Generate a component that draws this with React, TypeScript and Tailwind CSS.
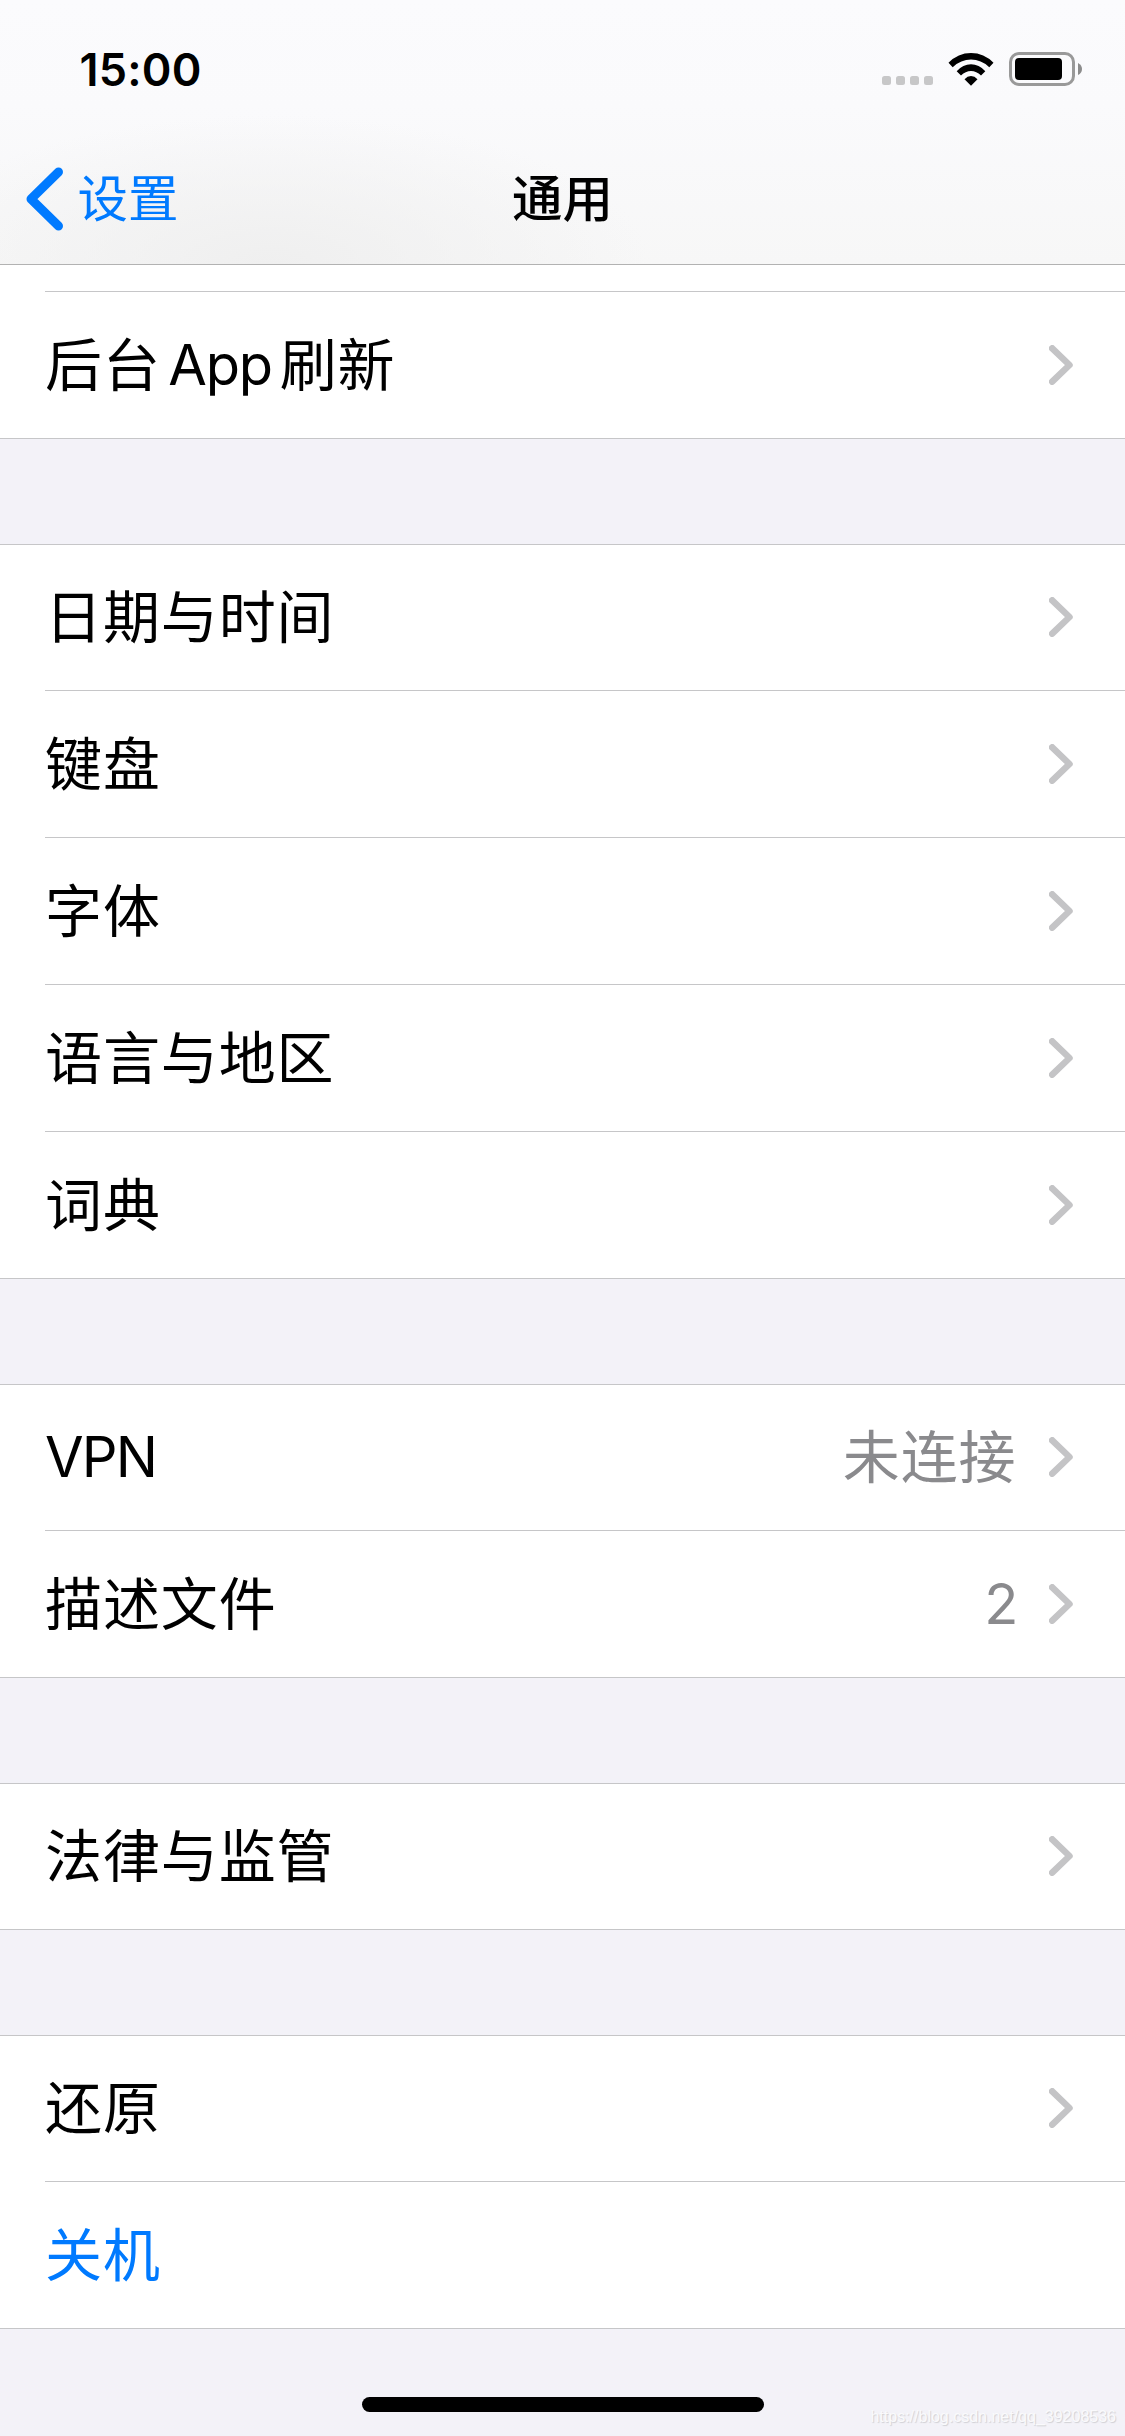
import React from "react";

type Item = { label: string; value?: string; action?: boolean };

function Chevron() {
  return (
    <svg width="24" height="40" viewBox="0 0 24 40" fill="none" className="shrink-0">
      <path d="M3.2 3.3 L20.5 20 L3.2 36.7" stroke="#c4c4c6" strokeWidth="6.5" strokeLinecap="round" strokeLinejoin="round" />
    </svg>
  );
}

function Label({ text }: { text: string }) {
  return (
    <>
      {text.split(/([A-Za-z0-9]+)/).filter(Boolean).map((part, i) =>
        /^[A-Za-z0-9]/.test(part) ? (
          <span key={i} className={i > 0 ? "mr-[8px] ml-[7.5px] text-[56px] tracking-[-1.3px]" : "text-[56px] tracking-[-1.8px]"}>{part}</span>
        ) : (
          <span key={i} className="align-[-1px] leading-none tracking-[0.9px]">{part}</span>
        )
      )}
    </>
  );
}

function Row({ item, first, last }: { item: Item; first: boolean; last: boolean }) {
  return (
    <li className={`flex pl-[45px] ${first ? "h-[146px]" : "h-[147px]"} ${last ? "border-b border-[#c6c6c8]" : ""}`}>
      <div className={`flex flex-1 items-center pr-[52px] ${first ? "pb-px" : ""} ${last ? "" : "border-b border-[#c6c6c8]"}`}>
        <span className={`flex-1 whitespace-pre text-[57px] leading-[84px] ${item.action ? "text-[#007aff]" : "text-black"}`}>
          <Label text={item.label} />
        </span>
        {item.value && (
          <span className="mr-[32.5px] text-[57px] leading-[84px] text-[#8a8a8d]">
            <Label text={item.value} />
          </span>
        )}
        {!item.action && <Chevron />}
      </div>
    </li>
  );
}

function Group({ items }: { items: Item[] }) {
  return (
    <ul className="border-t border-[#c6c6c8] bg-white">
      {items.map((item, i) => (
        <Row key={item.label} item={item} first={i === 0} last={i === items.length - 1} />
      ))}
    </ul>
  );
}

function StatusIcons() {
  return (
    <div className="flex items-center">
      <div className="mt-[22px] flex gap-[5px]">
        {[0, 1, 2, 3].map((i) => (
          <span key={i} className="size-[9px] rounded-[2.5px] bg-[#c7c7c8]" />
        ))}
      </div>
      <svg width="46" height="33" viewBox="0 0 46 33" className="ml-[15px]">
        <path d="M0.5 9.8 Q10 0 23 0 T45.500 9.800 L41.300 14.200 Q33 6.600 23 6.600 T4.700 14.200 Z" />
        <path d="M8.700 18.200 Q15 11.300 23 11.300 T37.300 18.200 L33 22.600 Q28.500 18 23 18 T13 22.600 Z" />
        <path d="M16.500 26.300 Q19.400 23 23 23 T29.500 26.300 L23 32.800 Z" />
      </svg>
      <svg width="74" height="34" viewBox="0 0 74 34" className="ml-[15px]">
        <rect x="1.500" y="1.500" width="63" height="31" rx="8.500" fill="none" stroke="#999999" strokeWidth="3" />
        <rect x="6" y="6" width="47" height="22" rx="4" />
        <path d="M69 11 Q73 13 73 17 T69 23 Z" fill="#8c8c8c" />
      </svg>
    </div>
  );
}

const groups: Item[][] = [
  [{ label: "日期与时间" }, { label: "键盘" }, { label: "字体" }, { label: "语言与地区" }, { label: "词典" }],
  [{ label: "VPN", value: "未连接" }, { label: "描述文件", value: "2" }],
  [{ label: "法律与监管" }],
  [{ label: "还原" }, { label: "关机", action: true }],
];

export default function App() {
  return (
    <main className="relative h-[2436px] w-[1125px] overflow-hidden bg-[#f3f2f8] font-[Inter,'Noto_Sans_CJK_SC',sans-serif]">
      <header className="flex h-[265px] flex-col border-b border-[#b2b2b2] bg-[radial-gradient(ellipse_380px_150px_at_270px_265px,#efefef,transparent),linear-gradient(to_bottom,#fbfbfd,#fafafc_40%,#f7f7f7)]">
        <div className="flex h-[138px] items-center justify-between pr-[42px] pl-[79.5px]">
          <time className="text-[45px] leading-none font-semibold tracking-[0.2px]">15:00</time>
          <StatusIcons />
        </div>
        <nav className="grid flex-1 grid-cols-3 items-center pb-[5px]">
          <button className="flex items-center pl-[26px] text-[#007aff]">
            <svg width="37" height="64" viewBox="0 0 37 64" fill="none">
              <path d="M32.500 5 L5 32 L32.500 59" stroke="currentColor" strokeWidth="9" strokeLinecap="round" strokeLinejoin="round" />
            </svg>
            <span className="ml-[14.5px] text-[50.5px] leading-[72px]">设置</span>
          </button>
          <h1 className="text-center text-[50.5px] leading-[72px] font-medium">通用</h1>
        </nav>
      </header>

      <div className="flex h-[27px] bg-white pl-[45px]">
        <div className="flex-1 border-b border-[#c6c6c8]" />
      </div>
      <ul className="bg-white">
        <Row item={{ label: "后台App刷新" }} first={false} last />
      </ul>
      <div className="mt-[105px] flex flex-col gap-[105px]">
        {groups.map((items) => (
          <Group key={items[0].label} items={items} />
        ))}
      </div>

      <div className="mx-auto mt-[68px] h-[15px] w-[402px] rounded-full bg-black" />
      <span className="absolute right-[9px] bottom-[8px] font-['Liberation_Sans'] text-[16px] leading-[22px] text-[#fafafc] [text-shadow:1px_1px_1px_#cfcfd3]">
        https://blog.csdn.net/qq_39208536
      </span>
    </main>
  );
}
